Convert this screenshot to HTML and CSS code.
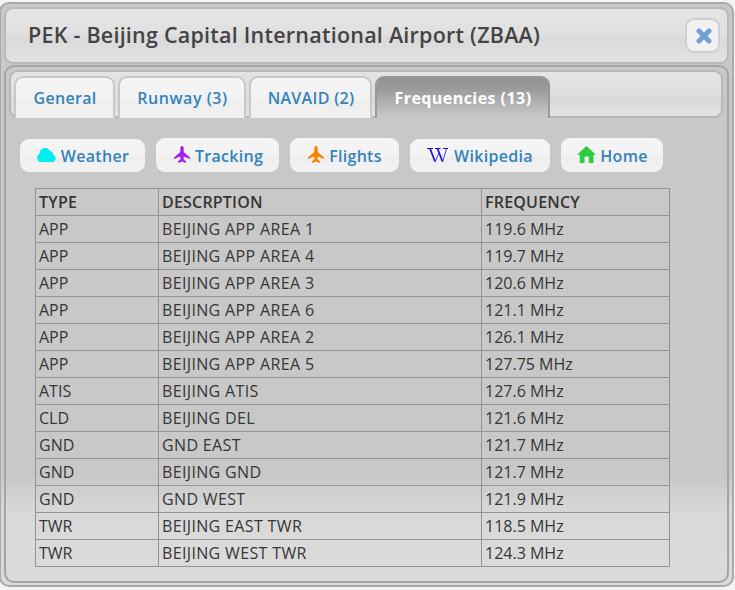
FILE: index.html
```
<!DOCTYPE html>
<html lang="en">
<head>
    <meta charset="UTF-8">
    <meta name="viewport" content="width=device-width, initial-scale=1.0">
    <title>PEK - Beijing Capital International Airport</title>
    <link rel="stylesheet" href="styles.css">
</head>
<body>

    <div class="dialog">
        <div class="titlebar">
            <span class="title">PEK - Beijing Capital International Airport (ZBAA)</span>
            <button class="close" aria-label="Close">
                <svg width="16" height="16" viewBox="0 0 16 16"><path d="M3 3l10 10M13 3L3 13" stroke="#6fa1d8" stroke-width="5" stroke-linecap="round"/></svg>
            </button>
        </div>

        <div class="tabs">
            <div class="tab-nav">
                <a class="tab general" href="#"><span>General</span></a>
                <a class="tab runway" href="#"><span>Runway (3)</span></a>
                <a class="tab navaid" href="#"><span>NAVAID (2)</span></a>
                <a class="tab active" href="#"><span>Frequencies (13)</span></a>
            </div>

            <div class="links">
                <a class="button short weather" href="#">
                    <svg width="19" height="14" viewBox="0 0 19 14"><path d="M4.500 14a4.300 4.300 0 0 1-1.900-8.200A5.400 5.400 0 0 1 12.800 2.900 3.500 3.500 0 0 1 16 6.600 3.800 3.800 0 0 1 15 14z" fill="#00eded"/></svg>
                    <span>Weather</span>
                </a>
                <a class="button tracking" href="#">
                    <svg width="16" height="17" viewBox="0 0 16 17"><path d="M8 0c1.200 0 1.700 1.300 1.700 2.500V6L16 11.500v1.400L9.800 10.500 9.500 13l2.500 2.500V17L8 15.600 4 17v-1.500L6.500 13l-.3-2.500L0 12.900v-1.400L6.300 6V2.500C6.300 1.300 6.800 0 8 0z" fill="#a020f0"/></svg>
                    <span>Tracking</span>
                </a>
                <a class="button flights" href="#">
                    <svg width="16" height="17" viewBox="0 0 16 17"><path d="M8 0c1.200 0 1.700 1.300 1.700 2.500V6L16 11.500v1.400L9.800 10.500 9.500 13l2.500 2.500V17L8 15.600 4 17v-1.500L6.500 13l-.3-2.500L0 12.900v-1.400L6.300 6V2.500C6.300 1.300 6.800 0 8 0z" fill="#ff8000"/></svg>
                    <span>Flights</span>
                </a>
                <a class="button short wikipedia" href="#">
                    <svg width="21" height="15" viewBox="0 0 21 15" fill="none" stroke="#1a0fe0"><path d="M0 .5h6M8 .5h5.500M16 .5h5" stroke-width="1"/><path d="M3 .5l5 13M10.500 .5l5 13" stroke-width="1.700"/><path d="M8 14L12 5M15.500 14l4-13" stroke-width=".8"/></svg>
                    <span>Wikipedia</span>
                </a>
                <a class="button home" href="#">
                    <svg width="19" height="17" viewBox="0 0 19 17"><path d="M9.500 0L19 8.700h-2.500V17h-4.700v-6.500H7.500V17H2.800V8.700H0z" fill="#2ecc40"/></svg>
                    <span>Home</span>
                </a>
            </div>

            <table class="freq">
                <tr><th>TYPE</th><th>DESCRPTION</th><th>FREQUENCY</th></tr>
                <tr><td>APP</td><td>BEIJING APP AREA 1</td><td>119.6 MHz</td></tr>
                <tr><td>APP</td><td>BEIJING APP AREA 4</td><td>119.7 MHz</td></tr>
                <tr><td>APP</td><td>BEIJING APP AREA 3</td><td>120.6 MHz</td></tr>
                <tr><td>APP</td><td>BEIJING APP AREA 6</td><td>121.1 MHz</td></tr>
                <tr><td>APP</td><td>BEIJING APP AREA 2</td><td>126.1 MHz</td></tr>
                <tr><td>APP</td><td>BEIJING APP AREA 5</td><td>127.75 MHz</td></tr>
                <tr><td>ATIS</td><td>BEIJING ATIS</td><td>127.6 MHz</td></tr>
                <tr><td>CLD</td><td>BEIJING DEL</td><td>121.6 MHz</td></tr>
                <tr><td>GND</td><td>GND EAST</td><td>121.7 MHz</td></tr>
                <tr><td>GND</td><td>BEIJING GND</td><td>121.7 MHz</td></tr>
                <tr><td>GND</td><td>GND WEST</td><td>121.9 MHz</td></tr>
                <tr><td>TWR</td><td>BEIJING EAST TWR</td><td>118.5 MHz</td></tr>
                <tr><td>TWR</td><td>BEIJING WEST TWR</td><td>124.3 MHz</td></tr>
            </table>
        </div>
    </div>

</body>
</html>
```

FILE: styles.css
```
* {
    box-sizing: border-box;
}

body {
    margin: 0;
    height: 590px;
    padding-top: 2px;
    overflow: hidden;
    background-color: #f4f4f4;
    font-family: "Trebuchet MS", "Open Sans", sans-serif;
    font-size: 16px;
    color: #363636;
}

.dialog {
    width: 735px;
    height: 585px;
    margin-left: -1px;
    padding: 3px;
    border: 2px solid #aaa;
    border-radius: 10px;
    background: linear-gradient(#c8c8c8 0, #c8c8c8 470px, #d9d9d9 510px, #dbdbdb 100%);
}

.titlebar {
    display: flex;
    justify-content: space-between;
    align-items: center;
    width: 725px;
    height: 57px;
    padding: 0 7px 0 22px;
    border: 2px solid #b8b8b8;
    border-radius: 9px;
    background: linear-gradient(#e4e4e4 0, #e1e1e1 45%, #dadada 55%, #e2e2e2 100%);
}

.title {
    padding-bottom: 2px;
    font-size: 21.500px;
    font-weight: 600;
    letter-spacing: 0.230px;
    white-space: nowrap;
    color: #444;
}

.close {
    display: flex;
    justify-content: center;
    align-items: center;
    width: 35px;
    height: 35px;
    padding: 0 0 0 2px;
    border: 2px solid #ccd0d4;
    border-radius: 9px;
    background: #f1f1f1;
}

.tabs {
    width: 725px;
    height: 518px;
    margin-top: 1px;
    padding: 3px;
    border: 2px solid #a5a5a5;
    border-radius: 10px;
}

.tab-nav {
    display: flex;
    gap: 3px;
    width: 714px;
    height: 48px;
    padding: 4px 0 0 3px;
    border: 2px solid #b8b8b8;
    border-radius: 9px;
    background: linear-gradient(#e4e4e4, #e0e0e0 50%, #dadada 60%, #e2e2e2);
}

.tab {
    display: flex;
    justify-content: center;
    align-items: center;
    height: 42px;
    padding: 0 0 1px 1px;
    border: 2px solid #c8c8c8;
    border-bottom: 0;
    border-radius: 9px 9px 0 0;
    background: linear-gradient(#f5f5f5, #f2f2f2 50%, #eee 60%, #f2f2f2);
    font-weight: 600;
    letter-spacing: 0.300px;
    white-space: nowrap;
    color: #3383bb;
    text-decoration: none;
}

.general { width: 101px; }
.runway { width: 128px; letter-spacing: 0.550px; }
.navaid { width: 123px; }

.active {
    width: 175px;
    border-color: #999;
    background: linear-gradient(#939393, #999 25%, #c3c3c3 90%, #c8c8c8);
    color: #fff;
    font-weight: 700;
    letter-spacing: 0.450px;
}

.links {
    display: flex;
    align-items: flex-end;
    gap: 11px;
    height: 54px;
    margin-left: 11px;
}

.button {
    display: flex;
    justify-content: center;
    align-items: center;
    gap: 5px;
    height: 34px;
    padding-left: 1px;
    border-radius: 9px;
    background: linear-gradient(#f5f5f5, #f3f3f3 50%, #eee 60%, #f3f3f3);
    font-weight: 600;
    letter-spacing: 0.300px;
    white-space: nowrap;
    color: #3383bb;
    text-decoration: none;
}

.button span {
    padding-top: 1px;
}

.button svg {
    margin-bottom: 1px;
}

.short { height: 33px; }

.short span {
    padding-top: 0;
}

.weather { width: 125px; }
.tracking { width: 123px; padding-left: 2px; }
.flights { width: 109px; }
.wikipedia { width: 140px; gap: 6px; padding-left: 0; }
.home { width: 102px; gap: 4px; }

.freq {
    width: 635px;
    margin: 16px 0 0 26px;
    border-collapse: collapse;
    table-layout: fixed;
}

.freq th,
.freq td {
    height: 27px;
    padding: 0 3px;
    border: 1px solid #949494;
    line-height: 22px;
    text-align: left;
    white-space: nowrap;
}

.freq th {
    font-weight: 600;
    letter-spacing: 0.200px;
}

.freq td:nth-child(2) {
    letter-spacing: 0.350px;
}

.freq th:nth-child(1) { width: 123px; }
.freq th:nth-child(2) { width: 323px; }
```
